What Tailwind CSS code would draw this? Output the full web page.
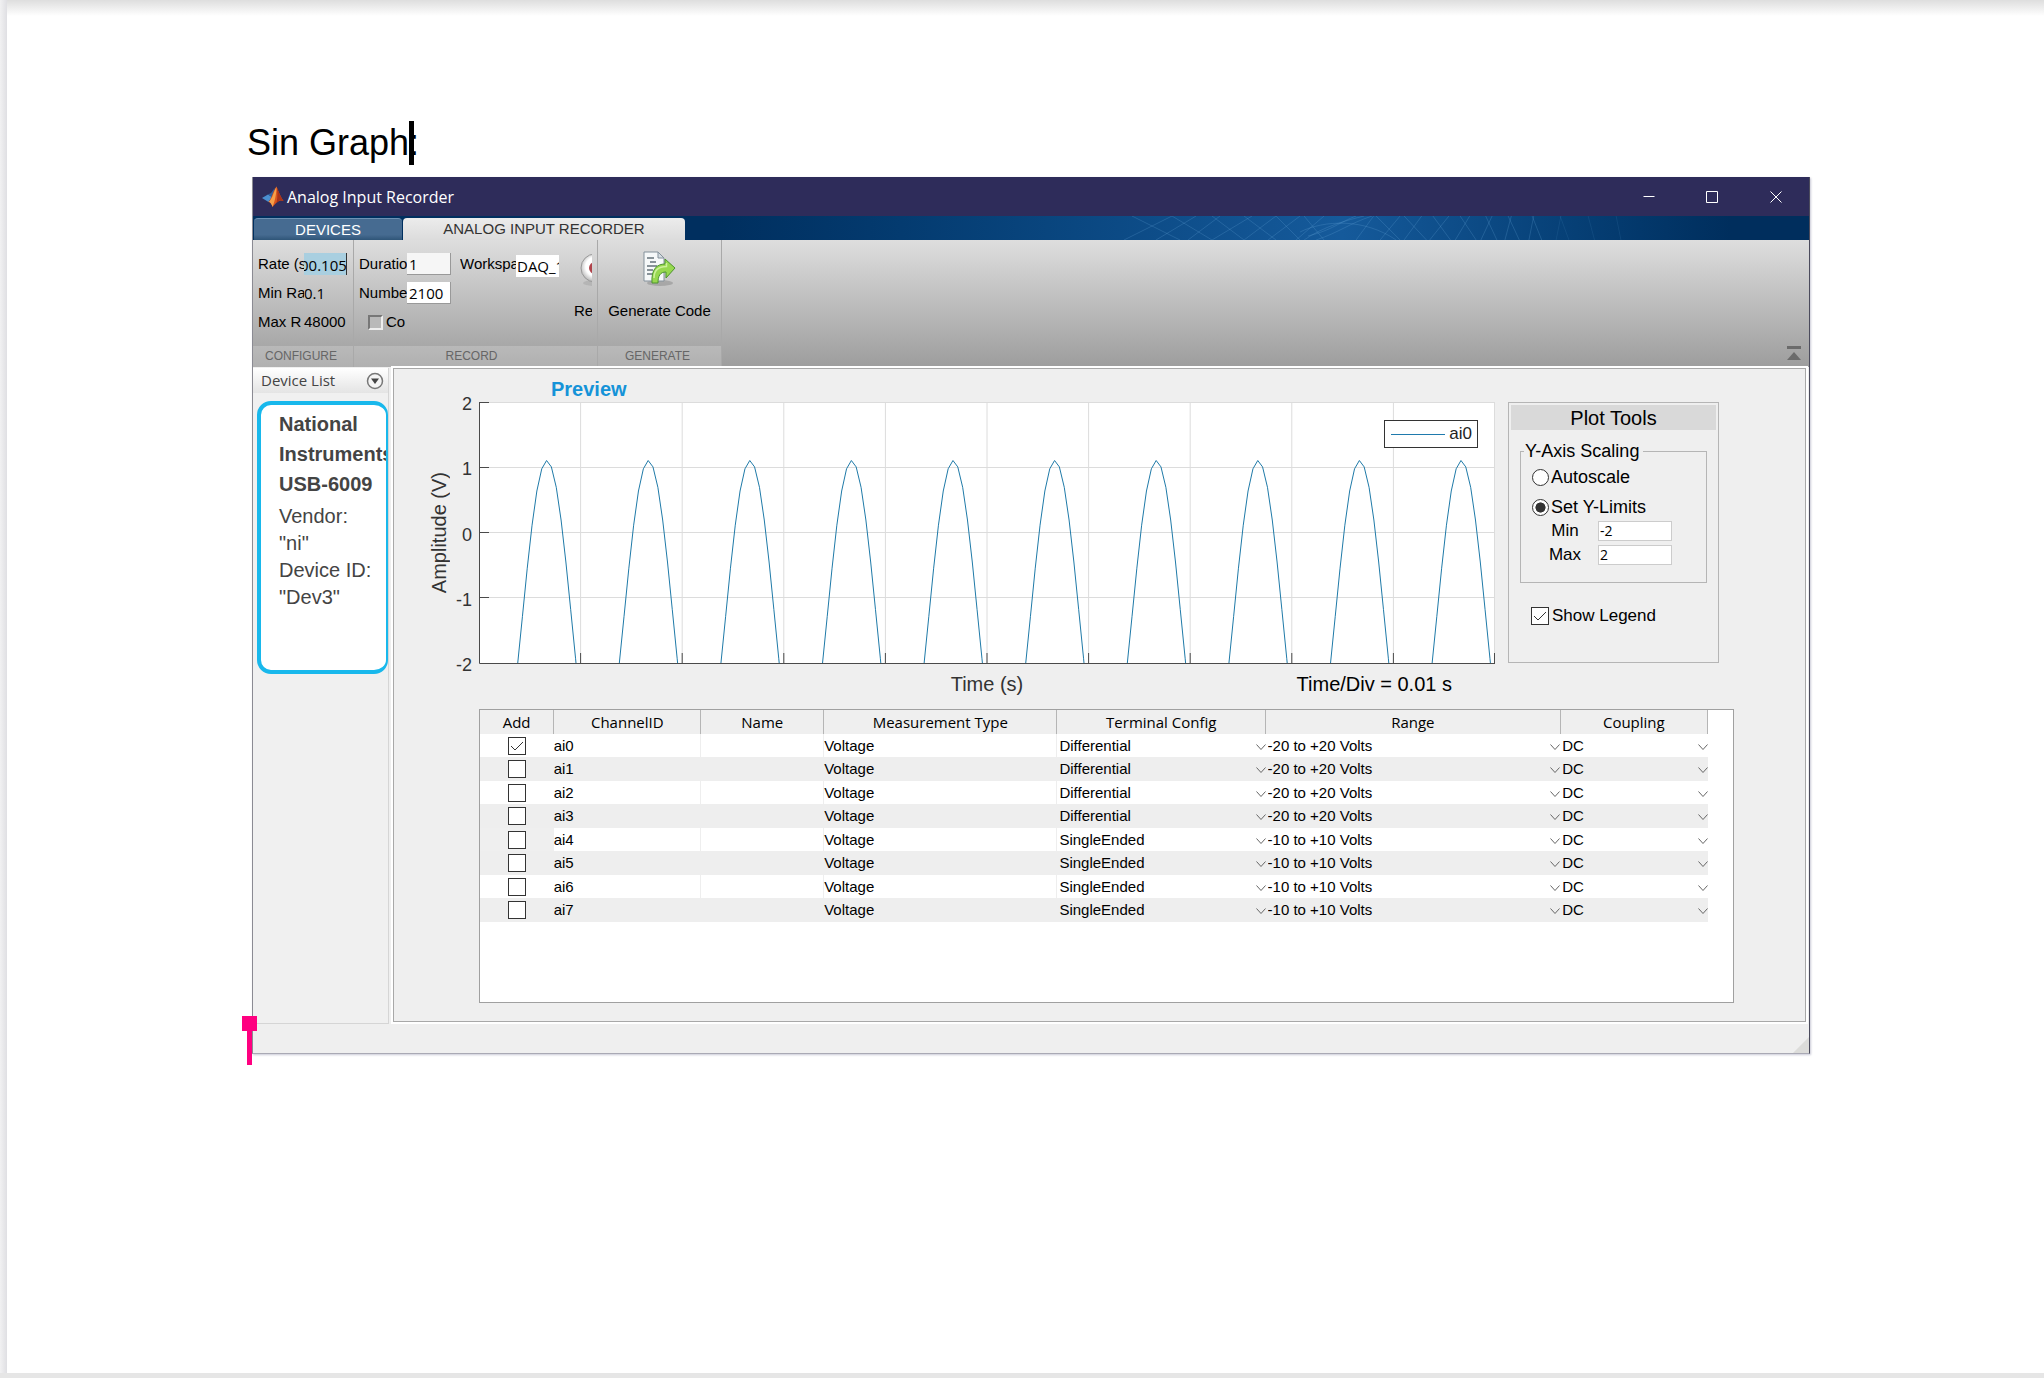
<!DOCTYPE html>
<html lang="en">
<head>
<meta charset="utf-8">
<title>Sin Graph</title>
<script src="https://cdn.jsdelivr.net/npm/@tailwindcss/browser@4"></script>
</head>
<body class="flex min-h-screen flex-col bg-[#e6e6e6] pb-[5px] font-['Liberation_Sans',Arial,sans-serif] text-black">
<div class="flex flex-1 bg-white">
  <div class="w-[7px] shrink-0 bg-linear-to-r from-[#f1f1f2] to-[#dfdfe3]"></div>
  <main class="min-w-0 flex-1 bg-linear-to-b from-[#dedede] to-white bg-[length:100%_16px] bg-no-repeat pt-[121px] pr-[234px] pl-[240px]">
    <h1 class="relative w-fit text-[36px] leading-[44px]">Sin Graph:<span class="absolute top-0 right-[5px] h-[44px] w-[5px] bg-black"></span></h1>

    <section class="relative mt-3 ml-[5px] border-r border-b border-l border-r-[#4b4b5c] border-b-[#a9a9b4] border-l-[#8b8b93] bg-[#efefef] shadow-[1px_1px_2px_#c9c9d6]">
      <!-- Title bar -->
      <header class="flex h-[39px] items-center bg-[#2e2c5a] pl-[9px] text-white">
        <svg class="h-[22px] w-[22px]" viewBox="0 0 22 22" aria-hidden="true">
          <path d="M0 12 L6 8.500 L10 11 L6.500 16 Z" fill="#4a8fd0"/>
          <path d="M6 8.500 L9 7 C11 4.500 12 2.500 13 2 L10 11 Z" fill="#2f5f9c"/>
          <path d="M6.500 16 C9 14 11 5 14.500 0.500 C16 4 18.500 11 21.500 15 C18 13.500 15.500 15 10.500 21 C10 18 8.500 16 6.500 16 Z" fill="#d9541e"/>
          <path d="M14.500 0.500 C14.500 6 13.500 14 10.500 21 C9.500 18 8.500 16 6.500 16 C10 14 12 5 14.500 0.500 Z" fill="#f6a04a"/>
          <path d="M14.500 0.500 C15.500 5 16 10 14.500 17 L18 14.300 L21.500 15 C18.500 11 16 4 14.500 0.500 Z" fill="#a8321a"/>
        </svg>
        <span class="ml-[3px] flex-1 font-['Open_Sans','Noto_Sans',sans-serif] text-[16px] leading-5">Analog Input Recorder</span>
        <button type="button" aria-label="Minimize" class="flex h-full w-[62px] items-center justify-center"><svg class="h-3 w-3" viewBox="0 0 12 12"><path d="M0.500 5.500 H11.500" stroke="#fff" fill="none"/></svg></button>
        <button type="button" aria-label="Maximize" class="flex h-full w-[63px] items-center justify-center"><svg class="h-3 w-3" viewBox="0 0 12 12"><path d="M0.500 0.500 H11.500 V11.500 H0.500 Z" stroke="#fff" fill="none"/></svg></button>
        <button type="button" aria-label="Close" class="flex h-full w-[66px] items-center justify-center"><svg class="h-3 w-3" viewBox="0 0 12 12"><path d="M0.500 0.500 L11.500 11.500 M11.500 0.500 L0.500 11.500" stroke="#fff" fill="none"/></svg></button>
      </header>

      <!-- Toolstrip tabs -->
      <nav class="relative flex h-[24px] bg-linear-to-r from-[#002f5f] from-30% via-[#155a9b] via-70% to-[#002e5d] to-95% pt-[2px] pl-px text-[15px] leading-[22px]">
        <svg class="absolute top-0 right-[8%] h-full w-[36%]" viewBox="0 0 700 24" preserveAspectRatio="none" fill="none" stroke="#6fb0e0" stroke-opacity="0.25" aria-hidden="true">
          <path d="M0 24 L60 0 M40 24 L90 0 M80 24 L120 0 M110 24 L160 0 M150 24 L190 0 M10 0 L70 24 M60 0 L110 24 M110 0 L150 24 M150 0 L190 24 M190 0 L220 24 M180 24 L220 0 M215 24 L250 0 M225 0 L250 24 M225 24 C250 10 280 4 300 0 M230 20 C260 14 270 6 290 0 M240 24 C270 16 280 8 310 0 M220 16 C250 4 300 2 340 24 M290 24 L312 0 M320 24 L345 0 M315 0 L345 24 M350 24 L372 0 M350 0 L378 24 M382 24 L406 0 M386 0 L408 24 M414 24 L432 0 M420 0 L440 24 M446 24 L460 0 M452 0 L466 24 M476 24 L484 0 M480 0 L494 24 M506 24 L512 0 M510 0 L522 24"/>
          <path d="M540 24 L546 0 M545 0 L556 24 M580 0 L588 24 M615 0 L621 24" stroke-opacity="0.120"/>
        </svg>
        <button type="button" class="relative w-[148px] rounded-t-sm border-t border-[#6f92b4] bg-linear-to-b from-[#466b91] from-75% to-[#2f5578] text-white">DEVICES</button>
        <button type="button" class="relative ml-px w-[282px] rounded-t-sm bg-linear-to-b from-[#ececec] to-[#dcdcdc] text-[#333]">ANALOG INPUT RECORDER</button>
      </nav>

      <!-- Toolstrip -->
      <div class="flex h-[127px] bg-linear-to-b from-[#dedede] to-[#9d9d9d] text-[15px] leading-[22px]">
        <div class="flex w-[101px] flex-col border-r border-[#a9a9a9]">
          <div class="grid flex-1 auto-rows-[22px] grid-cols-[46px_43px] content-start gap-y-[7px] pt-[13px] pl-[5px]">
            <label for="rate" class="overflow-hidden whitespace-nowrap">Rate (s</label>
            <input id="rate" value="00.105" class="w-[43px] border-r border-[#333] bg-[#a9cfe0] pt-px -indent-1 font-['Open_Sans','Noto_Sans',sans-serif] text-[15px] outline-none">
            <span class="overflow-hidden whitespace-nowrap">Min Ra</span><span class="font-['Open_Sans','Noto_Sans',sans-serif]">0.1</span>
            <span class="overflow-hidden whitespace-nowrap">Max R</span><span>48000</span>
          </div>
          <div class="h-[21px] bg-white/20 pl-3 text-xs leading-[21px] text-[#666]">CONFIGURE</div>
        </div>
        <div class="flex w-[244px] flex-col border-r border-[#a9a9a9]">
          <div class="flex flex-1 pt-[13px] pl-[5px]">
            <div class="grid auto-rows-[22px] grid-cols-[48px_44px] content-start gap-y-[7px]">
              <label for="dur" class="overflow-hidden whitespace-nowrap">Duratio</label>
              <input id="dur" value="1" class="w-[44px] border-r border-b border-[#999] bg-[#f6f6f6] px-[2px] pt-px font-['Open_Sans','Noto_Sans',sans-serif] text-[15px]">
              <label for="num" class="overflow-hidden whitespace-nowrap">Numbe</label>
              <input id="num" value="2100" class="w-[44px] border-r border-b border-[#999] bg-white px-[2px] pt-px font-['Open_Sans','Noto_Sans',sans-serif] text-[15px]">
              <label class="flex items-center gap-[3px] pl-[9px]"><input type="checkbox" class="h-[15px] w-[15px] shrink-0 appearance-none border-2 border-t-[#777] border-r-[#eee] border-b-[#eee] border-l-[#777] bg-[#b9b9b9]">Co</label>
            </div>
            <label for="ws" class="ml-[9px] h-[22px] w-[56px] overflow-hidden whitespace-nowrap">Workspa</label>
            <input id="ws" value="DAQ_1" class="mt-[2px] h-[22px] w-[43px] bg-white pl-px font-['Open_Sans','Noto_Sans',sans-serif] text-[15px]">
            <button type="button" class="ml-[15px] flex w-[18px] flex-col items-start overflow-hidden">
              <svg class="ml-[6px] h-[36px] w-[12px]" viewBox="0 0 12 36" aria-hidden="true">
                <defs><radialGradient id="rim" cx="50%" cy="45%" r="55%"><stop offset="0.600" stop-color="#fff"/><stop offset="1" stop-color="#b5b5b5"/></radialGradient></defs>
                <ellipse cx="14" cy="30" rx="11" ry="3" fill="#8a8a8a" opacity="0.300"/>
                <circle cx="15" cy="15" r="14" fill="url(#rim)" stroke="#999"/>
                <circle cx="15" cy="15" r="6" fill="#b0434b"/>
              </svg>
              <span class="mt-[12px] leading-[20px]">Re</span>
            </button>
          </div>
          <div class="h-[21px] bg-white/20 pr-2 text-center text-xs leading-[21px] text-[#666]">RECORD</div>
        </div>
        <div class="flex w-[124px] flex-col border-r border-[#a9a9a9]">
          <button type="button" class="flex flex-1 flex-col items-center pt-[11px]">
            <svg class="h-[36px] w-[36px]" viewBox="0 0 36 36" aria-hidden="true">
              <ellipse cx="18" cy="32" rx="13" ry="3" fill="#777" opacity="0.400"/>
              <path d="M2 1 H16 L22 7 V30 H2 Z" fill="#f6f8f9" stroke="#84919b"/>
              <path d="M16 1 V7 H22 Z" fill="#d6dde2" stroke="#84919b"/>
              <path d="M5 7 H12 M8 11 H14 M5 15 H15 M5 19 H11 M5 23 H11" stroke="#66717a" stroke-width="1.500"/>
              <path d="M10 32 C9 18 15 13 23 13 V8 L33 17 L24 27 V21 C18 21 16 25 16 32 Z" fill="#97d84f" stroke="#4c932f" stroke-linejoin="round"/>
              <path d="M12 27 C12 19 17 15.500 24.500 15.500 V12" fill="none" stroke="#cdf09a" stroke-width="1.500"/>
            </svg>
            <span class="mt-[14px] leading-[20px]">Generate Code</span>
          </button>
          <div class="h-[21px] bg-white/20 pr-1 text-center text-xs leading-[21px] text-[#666]">GENERATE</div>
        </div>
        <div class="flex flex-1 items-end justify-end pr-[8px] pb-[7px]">
          <button type="button" aria-label="Collapse toolstrip"><svg class="h-[14px] w-[14px]" viewBox="0 0 14 14" fill="#6b6b6b"><path d="M0 0 H14 V3 H0 Z M7 6 L14 14 H0 Z"/></svg></button>
        </div>
      </div>

      <div class="flex h-[657px] pt-px">
        <!-- Device list -->
        <aside class="flex w-[136px] shrink-0 flex-col border-r border-b border-[#d5d5d5] bg-[#f0f0f0]">
          <div class="flex h-[25px] items-center justify-between bg-linear-to-b from-white to-[#e4e4e4] pr-[4px] pl-2 font-['Open_Sans','Noto_Sans',sans-serif] text-[15px] text-[#444]">Device List
            <button type="button" aria-label="Device list options"><svg class="h-[18px] w-[18px]" viewBox="0 0 18 18"><circle cx="9" cy="9" r="7.500" fill="#f4f4f4" stroke="#777" stroke-width="1.500"/><path d="M5 6.500 H13 L9 12 Z" fill="#444"/></svg></button>
          </div>
          <div class="mt-[8px] ml-[4px] h-[273px] overflow-hidden rounded-[14px] border-4 border-r-2 border-[#18b8ec] bg-white pt-1 pl-[18px] text-xl whitespace-nowrap text-[#444]">
            <p class="font-bold leading-[30px]">National<br>Instruments<br>USB-6009</p>
            <p class="mt-1 leading-[27px]">Vendor:<br>"ni"<br>Device ID:<br>"Dev3"</p>
          </div>
        </aside>

        <!-- Preview panel -->
        <div class="mr-[3px] mb-[2px] ml-[4px] flex min-w-0 flex-1 flex-col border border-[#a8a8a8] pr-[72px] pl-[31px] shadow-[0_0_0_2px_#fff]">
          <h2 class="pt-[7px] pl-[126px] text-xl leading-[26px] font-bold text-[#1593d8]">Preview</h2>
          <div class="flex">
            <div class="flex w-[28px] items-center justify-center text-xl text-[#333]"><span class="rotate-180 whitespace-nowrap [writing-mode:vertical-rl]">Amplitude (V)</span></div>
            <div class="-mt-2 -mb-[11px] flex w-[26px] flex-col justify-between pr-[7px] text-right text-lg leading-5 text-[#333]"><span>2</span><span>1</span><span>0</span><span>-1</span><span>-2</span></div>
            <div class="relative h-[262px] min-w-0 flex-1">
              <svg class="h-full w-full" viewBox="0 0 1015 262" preserveAspectRatio="none" fill="none" role="img" aria-label="Preview of channel ai0">
                <path d="M0 0 H1015 V262 H0 Z" fill="#fff"/>
                <path d="M0 0.500 H1015 M0 65.500 H1015 M0 130.500 H1015 M0 195.500 H1015 M101.500 0 V262 M203 0 V262 M304.500 0 V262 M406 0 V262 M507.500 0 V262 M609 0 V262 M710.500 0 V262 M812 0 V262 M913.500 0 V262 M1014.500 0 V262" stroke="#dcdcdc" vector-effect="non-scaling-stroke"/>
                <path d="M0.500 0 V261.500 H1015 M0 0.500 H10 M0 65.500 H10 M0 130.500 H10 M0 195.500 H10 M101.500 251 V262 M203 251 V262 M304.500 251 V262 M406 251 V262 M507.500 251 V262 M609 251 V262 M710.500 251 V262 M812 251 V262 M913.500 251 V262 M1014.500 251 V262" stroke="#4a4a4a" vector-effect="non-scaling-stroke"/>
                <defs><path id="wave" d="M-28.800 202.500 L-24.100 155.800 L-19.300 107.700 L-14.500 64.700 L-9.700 30.500 L-4.800 8.300 L0 0 L4.800 6.400 L9.700 26.800 L14.500 59.500 L19.300 101.500 L24.100 149.200 L29 198.300 L29.400 202.500" vector-effect="non-scaling-stroke"/></defs>
                <g stroke="#1f7aa8" transform="translate(0 58.500)">
                  <use href="#wave" x="67.500"/><use href="#wave" x="169"/><use href="#wave" x="270.500"/><use href="#wave" x="372"/><use href="#wave" x="473.500"/><use href="#wave" x="575"/><use href="#wave" x="676.500"/><use href="#wave" x="778"/><use href="#wave" x="879.500"/><use href="#wave" x="981"/>
                </g>
              </svg>
              <div class="absolute top-[18px] right-[17px] flex h-[28px] w-[94px] items-center justify-between border border-[#333] bg-white pr-[5px] pl-[6px] text-[17px] text-[#222]"><span class="h-px w-[54px] bg-[#1f7aad]"></span>ai0</div>
            </div>
            <fieldset class="ml-[13px] h-[261px] w-[211px] border border-[#b5b5b5] p-[2px] text-[17px] leading-5">
              <h3 class="h-[25px] bg-[#d9d9d9] text-center text-xl leading-[26px]">Plot Tools</h3>
              <fieldset class="mx-[9px] mt-[10px] h-[143px] border border-[#b5b5b5] pl-[11px] text-lg">
                <legend class="-ml-[8px] pr-[4px] pl-[1px] leading-[22px]">Y-Axis Scaling</legend>
                <label class="flex h-[30px] items-center gap-[2px] leading-5"><input type="radio" name="scale" class="h-[17px] w-[17px] appearance-none rounded-full border border-[#333] bg-white">Autoscale</label>
                <label class="flex h-[30px] items-center gap-[2px] leading-5"><input type="radio" name="scale" checked class="h-[17px] w-[17px] appearance-none rounded-full border border-[#333] bg-white bg-radial from-[#333] from-45% to-white to-50%">Set Y-Limits</label>
                <div class="-mt-px grid grid-cols-[32px_34px_74px] items-center gap-y-[4px] text-[17px] leading-5 [&>label]:col-span-2 [&>label]:w-[54px] [&>label]:pl-[12px] [&>label]:text-center">
                  <label for="ymin">Min</label><input id="ymin" value="-2" class="h-5 border border-[#ccc] bg-white px-px font-['Open_Sans','Noto_Sans',sans-serif] text-sm">
                  <label for="ymax">Max</label><input id="ymax" value="2" class="h-5 border border-[#ccc] bg-white px-px font-['Open_Sans','Noto_Sans',sans-serif] text-sm">
                </div>
              </fieldset>
              <label class="mt-[23px] ml-[20px] flex items-center gap-[3px]"><span class="relative flex"><input type="checkbox" checked class="h-[18px] w-[18px] appearance-none border border-[#333] bg-white"><svg class="pointer-events-none absolute inset-0 h-[18px] w-[18px]" viewBox="0 0 18 18" fill="none" stroke="#333"><path d="M3 9 L7 13 L15 5"/></svg></span>Show Legend</label>
            </fieldset>
            <div class="w-[14px]"></div>
          </div>
          <div class="mt-[8px] mr-[238px] ml-[54px] grid grid-cols-3 text-xl leading-[24px]">
            <span></span><span class="text-center text-[#333]">Time (s)</span><span class="pr-[43px] text-right">Time/Div = 0.01 s</span>
          </div>
          <div class="mt-[13px] -mr-px ml-[54px] h-[294px] border border-[#a0a0a0] bg-white pr-[25px]">
            <table class="w-full table-fixed border-collapse text-[15px] leading-5">
              <colgroup><col class="w-[6%]"><col class="w-[12%]"><col class="w-[10%]"><col class="w-[19%]"><col class="w-[17%]"><col class="w-[24%]"><col class="w-[12%]"></colgroup>
              <thead><tr class="h-[24px] bg-[#efefef] font-['Open_Sans','Noto_Sans',sans-serif] [&>th]:border-r [&>th]:border-[#b5b5b5] [&>th]:p-0 [&>th]:font-normal">
                <th>Add</th><th>ChannelID</th><th>Name</th><th>Measurement Type</th><th>Terminal Config</th><th>Range</th><th>Coupling</th>
              </tr></thead>
              <tbody id="channels"></tbody>
            </table>
          </div>
        </div>
      </div>
      <footer class="relative h-[29px]">
        <svg class="absolute right-0 bottom-0 h-4 w-4" viewBox="0 0 16 16" aria-hidden="true"><path d="M16 0 V16 H0 Z" fill="#dcdcda"/></svg>
      </footer>
      <!-- Selection handle -->
      <div class="absolute -bottom-[12px] -left-[11px] flex flex-col items-center"><span class="h-[15px] w-[15px] bg-[#ff0080]"></span><span class="h-[34px] w-[5px] bg-[#ff0080]"></span></div>
    </section>
  </main>
</div>
<script>
const pick = (name, i, value) => `<td class="p-0"><div class="relative flex"><select aria-label="${name} ai${i}" class="w-full appearance-none bg-transparent pl-[2px] leading-5"><option>${value}</option></select><svg class="pointer-events-none absolute top-[7px] right-0 h-[8px] w-[10px]" viewBox="0 0 10 8" fill="none" stroke="#666"><path d="M0.500 1.500 L5 6.500 L9.500 1.500"/></svg></div></td>`;
document.getElementById('channels').innerHTML = Array.from({length: 8}, (_, i) => `
<tr class="odd:h-[23px] even:h-[24px] even:bg-[#eeeeee]">
  <td class="p-0 ${i === 4 ? 'bg-[#efefef]' : ''}"><span class="relative mx-auto flex h-[18px] w-[18px]"><input type="checkbox" aria-label="Add ai${i}" ${i === 0 ? 'checked' : ''} class="h-[18px] w-[18px] appearance-none border border-[#333] bg-white">${i === 0 ? '<svg class="pointer-events-none absolute inset-0 h-[18px] w-[18px]" viewBox="0 0 18 18" fill="none" stroke="#333"><path d="M3 9 L7 13 L15 5"/></svg>' : ''}</span></td>
  <td class="border-r border-[#eee] p-0">ai${i}</td><td class="border-r border-[#eee] p-0"></td><td class="border-r border-[#eee] p-0">Voltage</td>
  ${pick('Terminal config', i, i < 4 ? 'Differential' : 'SingleEnded')}${pick('Range', i, i < 4 ? '-20 to +20 Volts' : '-10 to +10 Volts')}${pick('Coupling', i, 'DC')}
</tr>`).join('');
</script>
</body>
</html>
